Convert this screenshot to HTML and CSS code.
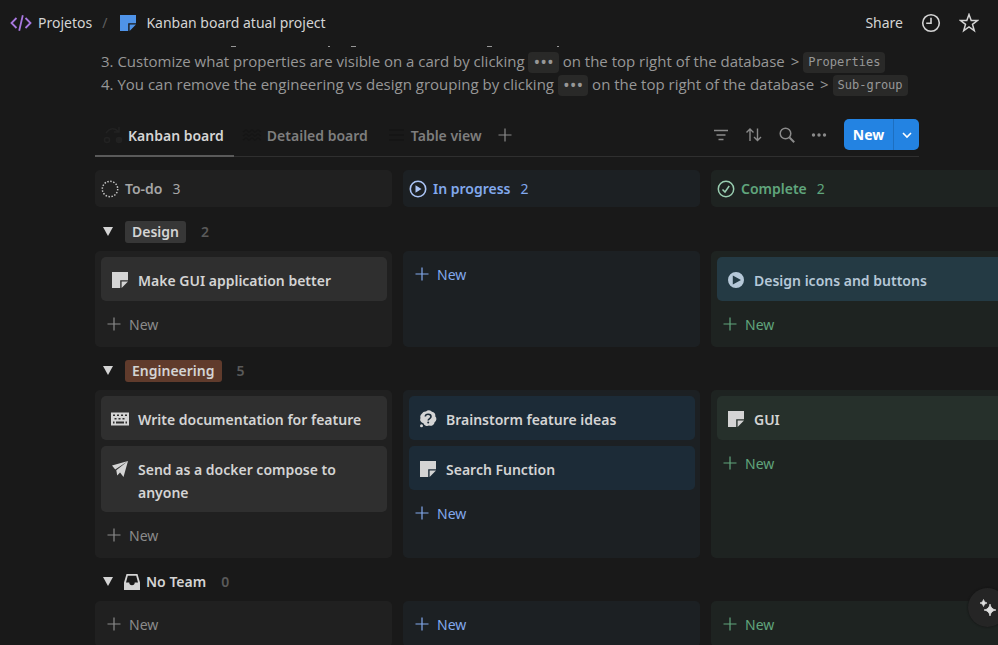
FILE: index.html
```html
<!DOCTYPE html>
<html lang="en">
<head>
<meta charset="utf-8">
<title>Kanban board atual project</title>
<link rel="stylesheet" href="styles.css">
</head>
<body>
<svg class="defs" aria-hidden="true">
  <symbol id="plus" viewBox="0 0 14 14"><path d="M7 .5v13M.5 7h13" fill="none" stroke="currentColor" stroke-width="1.2"/></symbol>
  <symbol id="note" viewBox="0 0 16 16"><path d="M0 0h16v8.2H8.2V16H0zM9.6 9.6H16L9.6 16z" fill="currentColor"/></symbol>
  <symbol id="caret" viewBox="0 0 10 9"><path d="M0 0h10L5 9z" fill="currentColor"/></symbol>
</svg>

<header class="topbar">
  <nav class="crumbs">
    <a href="#" class="crumb">
      <svg class="code" viewBox="0 0 22 18" fill="none" stroke="#a978e0" stroke-width="1.8"><path d="M6.500 4L1.500 9l5 5M15.500 4l5 5-5 5M12.800 1.200L9.200 16.800"/></svg>
      Projetos
    </a>
    <span class="slash">/</span>
    <a href="#" class="crumb page"><svg class="note"><use href="#note"/></svg>Kanban board atual project</a>
  </nav>
  <div class="actions">
    <button class="share">Share</button>
    <button aria-label="Updates"><svg width="20" height="20" viewBox="0 0 20 20" fill="none" stroke="currentColor" stroke-width="1.600"><circle cx="10" cy="10" r="8.300"/><path d="M10 4.800V10.200H5.200"/></svg></button>
    <button aria-label="Favorite"><svg width="20" height="20" viewBox="0 0 20 20" fill="none" stroke="currentColor" stroke-width="1.500"><path d="M10 1.500l2.200 6h6.300l-5 3.900 1.800 6.300L10 14l-5.300 3.700 1.800-6.300-5-3.900h6.300z"/></svg></button>
  </div>
</header>

<main class="page-body">
  <svg class="scroll-edge" width="480" height="2" viewBox="0 0 480 2" stroke="#979797" aria-hidden="true"><path d="M136 1.500h5M233 1.500h2M256 1.500h5M392 1.500h5M462 1.500h2"/></svg>
  <ol class="help" start="3">
    <li>Customize what properties are visible on a card by clicking <code class="dots">•••</code> on the top right of the database <span class="gt">&gt;</span> <code>Properties</code></li>
    <li>You can remove the engineering vs design grouping by clicking <code class="dots">•••</code> on the top right of the database <span class="gt">&gt;</span> <code>Sub-group</code></li>
  </ol>

  <div class="toolbar">
    <div class="tabs">
      <button class="tab active"><svg width="20" height="18" viewBox="0 0 20 18" fill="none" stroke="#222" stroke-width="1.500"><circle cx="4" cy="14" r="2.500"/><circle cx="16" cy="14" r="2.500" fill="#222"/><path d="M3 7q6-8 13-1M16 1v5h-5"/></svg>Kanban board</button>
      <button class="tab"><svg width="20" height="18" viewBox="0 0 20 18" fill="none" stroke="#151515" stroke-width="1.500"><path d="M1 6l3-2 3 2 3-2 3 2 3-2 3 2M1 10l3-2 3 2 3-2 3 2 3-2 3 2M1 14l3-2 3 2 3-2 3 2 3-2 3 2"/></svg>Detailed board</button>
      <button class="tab"><svg width="20" height="18" viewBox="0 0 20 18" fill="none" stroke="#151515" stroke-width="1.500"><path d="M3 4h15M3 9h15M3 14h15"/></svg>Table view</button>
      <button class="add" aria-label="Add view"><svg class="plus"><use href="#plus"/></svg></button>
    </div>
    <div class="tools">
      <button aria-label="Filter"><svg width="16" height="16" viewBox="0 0 16 16" fill="none" stroke="currentColor" stroke-width="1.500"><path d="M1 3.500h14M3.500 8h9M5.500 12.500h5"/></svg></button>
      <button aria-label="Sort"><svg width="18" height="16" viewBox="0 0 18 16" fill="none" stroke="currentColor" stroke-width="1.400"><path d="M5 14V2M1.500 5.500L5 2l3.500 3.500M12.500 1.500v12M9 10l3.500 3.500L16 10"/></svg></button>
      <button aria-label="Search"><svg width="16" height="16" viewBox="0 0 16 16" fill="none" stroke="currentColor" stroke-width="1.500"><circle cx="6.500" cy="6.500" r="5.300"/><path d="M10.500 10.500l4.700 4.700" stroke-width="2"/></svg></button>
      <button aria-label="More"><svg width="16" height="16" viewBox="0 0 16 16" fill="currentColor"><circle cx="2.500" cy="8" r="1.700"/><circle cx="8" cy="8" r="1.700"/><circle cx="13.500" cy="8" r="1.700"/></svg></button>
      <div class="new-split">
        <button class="new-main">New</button>
        <button class="new-more" aria-label="New options"><svg width="10" height="8" viewBox="0 0 10 8" fill="none" stroke="currentColor" stroke-width="1.600"><path d="M1 2l4 4 4-4"/></svg></button>
      </div>
    </div>
  </div>

  <section class="board">
    <div class="row heads">
      <h2 class="head gray"><svg viewBox="0 0 18 18" fill="none" stroke="#c4c4c4" stroke-width="1.500"><circle cx="9" cy="9" r="7.700" stroke-dasharray="1.500 1.525"/></svg>To-do<span class="n">3</span></h2>
      <h2 class="head blue"><svg viewBox="0 0 18 18" fill="none" stroke="#abc4f5" stroke-width="1.600"><circle cx="9" cy="9" r="7.700"/><path d="M6.500 5.300v7.400L12.500 9z" fill="#abc4f5" stroke="none"/></svg>In progress<span class="n">2</span></h2>
      <h2 class="head green"><svg viewBox="0 0 18 18" fill="none" stroke="#98cdb0" stroke-width="1.500"><circle cx="9" cy="9" r="7.700"/><path d="M5.500 9.500l2.500 2.500 4.200-6"/></svg>Complete<span class="n">2</span></h2>
    </div>

    <div class="group"><button class="toggle" aria-label="Toggle Design"><svg><use href="#caret"/></svg></button><span class="tag">Design</span><span class="count">2</span></div>
    <div class="row">
      <div class="col gray">
        <a href="#" class="card"><svg class="note"><use href="#note"/></svg><span>Make GUI application better</span></a>
        <button class="new"><svg class="plus"><use href="#plus"/></svg>New</button>
      </div>
      <div class="col blue"><button class="new"><svg class="plus"><use href="#plus"/></svg>New</button></div>
      <div class="col green">
        <a href="#" class="card teal"><svg class="ic" viewBox="0 0 18 18"><path fill="currentColor" fill-rule="evenodd" d="M9 1a8 8 0 1 0 0 16A8 8 0 1 0 9 1zM5.800 4.500L14 9l-8.200 4.500z"/></svg><span>Design icons and buttons</span></a>
        <button class="new"><svg class="plus"><use href="#plus"/></svg>New</button>
      </div>
    </div>

    <div class="group"><button class="toggle" aria-label="Toggle Engineering"><svg><use href="#caret"/></svg></button><span class="tag brown">Engineering</span><span class="count">5</span></div>
    <div class="row">
      <div class="col gray">
        <a href="#" class="card"><svg class="ic" viewBox="0 0 18 18"><path fill="currentColor" fill-rule="evenodd" d="M0 2.500h18v13H0zM2 4.500v1.500h2V4.500zM6 4.500v1.500h2V4.500zM10 4.500v1.500h2V4.500zM14 4.500v1.500h2V4.500zM3.500 8v1.500h2V8zM7.500 8v1.500h2V8zM11.500 8v1.500h2V8zM2 11.500v2h1.500v-2zM5 11.500v2h8v-2zM14.500 11.500v2H16v-2z"/></svg><span>Write documentation for feature</span></a>
        <a href="#" class="card"><svg class="ic" viewBox="0 0 18 18"><path fill="currentColor" d="M17 1L1 5.500l3.200 4zM17 1L5.300 10.300l.9 5.200 2.400-2.400zM17 1L8.300 11.500l4.200 5.500z"/></svg><span>Send as a docker compose to anyone</span></a>
        <button class="new"><svg class="plus"><use href="#plus"/></svg>New</button>
      </div>
      <div class="col blue">
        <a href="#" class="card"><svg class="ic" viewBox="0 0 18 18"><path fill="currentColor" d="M7 1.500a4 4 0 0 1 6 .3 3.500 3.500 0 0 1 3.200 4.400 3.800 3.800 0 0 1-.6 6A4 4 0 0 1 10 15.500a4 4 0 0 1-5.600-2.200A3.800 3.800 0 0 1 1.500 8 4 4 0 0 1 3 3.500a4 4 0 0 1 4-2z"/><circle cx="2.500" cy="15.800" r="1.500" fill="currentColor"/><path d="M6.300 6.500C6.500 3.500 12 3.500 12 6.700c0 2-2.800 1.800-2.800 3.800" fill="none" stroke="#1c2b37" stroke-width="1.600"/><circle cx="9.200" cy="12.600" r="1" fill="#1c2b37"/></svg><span>Brainstorm feature ideas</span></a>
        <a href="#" class="card"><svg class="note"><use href="#note"/></svg><span>Search Function</span></a>
        <button class="new"><svg class="plus"><use href="#plus"/></svg>New</button>
      </div>
      <div class="col green">
        <a href="#" class="card"><svg class="note"><use href="#note"/></svg><span>GUI</span></a>
        <button class="new"><svg class="plus"><use href="#plus"/></svg>New</button>
      </div>
    </div>

    <div class="group"><button class="toggle" aria-label="Toggle No Team"><svg><use href="#caret"/></svg></button><svg class="tray" viewBox="0 0 16 16"><path fill="currentColor" fill-rule="evenodd" d="M2.500 0h11L16 8.500V16H0V8.500zM3.800 1.700L2 8.500h3.300a2.700 2.700 0 0 0 5.400 0H14L12.200 1.700z"/></svg><span class="plain">No Team</span><span class="count">0</span></div>
    <div class="row">
      <div class="col gray"><button class="new"><svg class="plus"><use href="#plus"/></svg>New</button></div>
      <div class="col blue"><button class="new"><svg class="plus"><use href="#plus"/></svg>New</button></div>
      <div class="col green"><button class="new"><svg class="plus"><use href="#plus"/></svg>New</button></div>
    </div>
  </section>
</main>

<button class="ai" aria-label="Assistant"><svg width="18" height="18" viewBox="0 0 18 18" fill="#dedede"><path d="M11 5q.8 5.200 6 6-5.200.8-6 6-.8-5.200-6-6 5.200-.8 6-6zM4.500.5Q5 3.500 8 4q-3 .5-3.500 3.500Q4 4.500 1 4q3-.5 3.500-3.500z" stroke="#dedede" stroke-width=".7"/></svg></button>
</body>
</html>
```
FILE: styles.css
```css
* { box-sizing: border-box; }
body {
  margin: 0;
  height: 100vh;
  overflow: hidden;
  background: #191919;
  color: #d4d4d4;
  font: 14px/23px "Noto Sans", "Open Sans", sans-serif;
}
svg { flex: none; display: block; }
.defs { position: absolute; width: 0; height: 0; }
a { color: inherit; text-decoration: none; }
button { font: inherit; color: inherit; background: none; border: 0; padding: 0; }

.topbar { display: flex; justify-content: space-between; align-items: center; height: 45px; padding: 0 19px 0 10px; }
.crumbs, .crumb, .actions { display: flex; align-items: center; }
.crumb { gap: 6px; }
.crumb.page { gap: 10px; }
.code { width: 22px; height: 18px; }
.note { width: 16px; height: 16px; }
.crumb .note { color: #4f93e8; }
.slash { color: #5f5f5f; padding: 0 13px 0 10px; }
.actions { gap: 18px; }

.page-body { padding-left: 95px; }
.help { margin: 0; padding: 3px 0 0 6px; height: 66px; color: #979797; white-space: nowrap; counter-reset: step 2; font: 15px/23px "Open Sans", "Noto Sans", sans-serif; }
.help li { display: block; height: 23px; counter-increment: step; }
.help li::before { content: counter(step) ". "; }
code { display: inline-block; height: 21px; padding: 0 5px; border-radius: 4px; background: #292928; font: 12px/21px "DejaVu Sans Mono", monospace; vertical-align: middle; }
.dots { font: 18px/21px "Open Sans", sans-serif; }
.gt { padding: 0 0 0 2px; }

.toolbar { display: flex; justify-content: space-between; height: 44px; margin-right: 79px; border-bottom: 1px solid #2f2f2f; }
.tabs, .tools { display: flex; align-items: center; }
.tab { display: flex; align-items: center; gap: 5px; height: 44px; padding: 3px 10px 0 8px; color: #7e7e7e; font-weight: 600; border-bottom: 2px solid transparent; }
.tab.active { color: #d4d4d4; border-bottom-color: #5a5a5a; }
.add { color: #8a8a8a; margin-left: 6px; }
.plus { width: 14px; height: 14px; }
.tools { gap: 16px; color: #8a8a8a; }
.new-split { display: flex; height: 31px; margin-left: 1px; border-radius: 5px; overflow: hidden; background: #2383e2; color: #fff; font-weight: 700; }
.new-main { width: 49px; }
.new-more { width: 26px; display: flex; align-items: center; justify-content: center; border-left: 1px solid #1d6fc0; }

.board { padding-top: 13px; }
.row { display: grid; grid-template-columns: repeat(3, 297px); gap: 11px; }
.heads { margin-bottom: 1px; }
.head { display: flex; align-items: center; height: 37px; margin: 0; padding: 0 6px; border-radius: 5px; font-size: 14px; font-weight: 600; }
.head svg { width: 18px; height: 18px; margin-right: 6px; }
.head .n { margin-left: 10px; font-weight: 400; }
.gray { background: #202020; color: #8b8b8b; }
.head.gray { color: #a6a6a6; }
.blue { background: #1c2023; color: #82a9ed; }
.green { background: #1e2321; color: #60a57c; }

.group { display: flex; align-items: center; height: 43px; padding: 4px 0 0 8px; font-weight: 600; }
.toggle svg { width: 10px; height: 9px; }
.tag { margin-left: 12px; padding: 0 7px; border-radius: 3px; background: #373737; line-height: 22px; }
.brown { background: #603b2c; }
.count { margin-left: 15px; color: #5a5a5a; }
.tray { width: 16px; height: 16px; margin: 0 6px 0 11px; }

.col { border-radius: 5px; padding: 0 5px 0 6px; }
.card { display: flex; gap: 9px; min-height: 44px; margin-top: 6px; padding: 12px 18px 8px 10px; border-radius: 5px; background: #2f2f2f; color: #d4d4d4; font-weight: 600; }
.card .note { margin: 3px 1px 0; }
.ic { width: 18px; height: 18px; margin-top: 2px; }
.blue .card { background: #1c2b37; }
.green .card { background: #26302b; }
.green .card.teal { background: #243a44; color: #b6c8d8; }
.new { display: flex; align-items: center; gap: 8px; width: 100%; height: 46px; padding-left: 6px; }

.ai { position: fixed; right: -9px; bottom: 18px; width: 39px; height: 39px; border-radius: 50%; background: #252525; display: flex; align-items: center; justify-content: center; box-shadow: 0 0 2px #111; }
```
